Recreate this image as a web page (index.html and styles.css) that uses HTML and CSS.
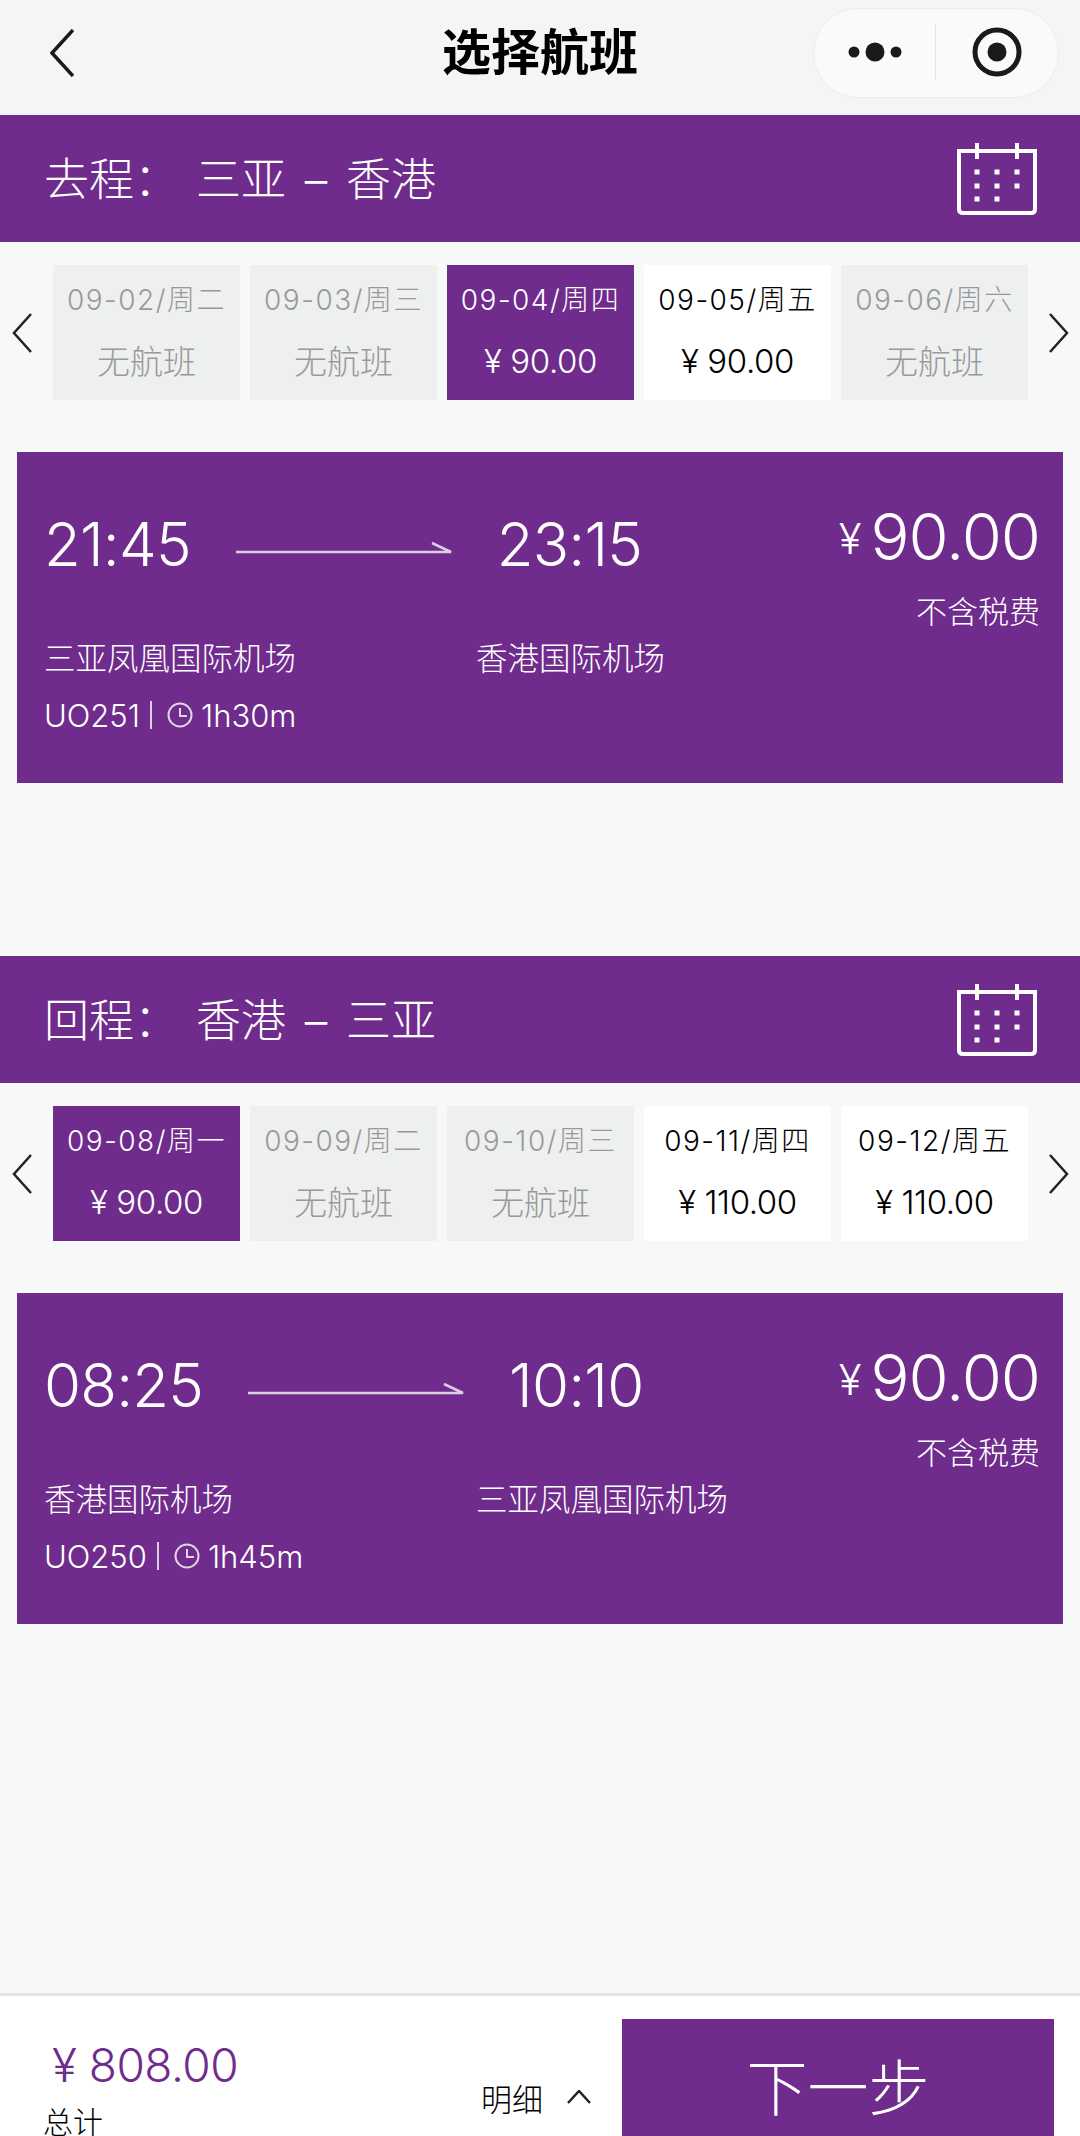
FILE: index.html
```html
<!DOCTYPE html>
<html>
  <head>
    <meta charset="utf-8">
    <title>选择航班</title>
    <link rel="stylesheet" href="styles.css">
  </head>
  <body>
    <div id="app">

      <div class="nav">
        <svg class="nav-back" width="24" height="48" viewBox="0 0 24 48"><path d="M23 1 L2 24 L23 47" fill="none" stroke="#1a1a1a" stroke-width="3.5"/></svg>
        <div class="nav-title">选择航班</div>
        <div class="capsule">
          <div class="capsule-side">
            <svg width="54" height="20" viewBox="0 0 54 20"><circle cx="6" cy="10" r="5.5" fill="#1a1a1a"/><circle cx="27" cy="10" r="9.5" fill="#1a1a1a"/><circle cx="48" cy="10" r="5.5" fill="#1a1a1a"/></svg>
          </div>
          <div class="capsule-side">
            <svg width="50" height="50" viewBox="0 0 50 50"><circle cx="25" cy="25" r="22" fill="none" stroke="#1a1a1a" stroke-width="5"/><circle cx="25" cy="25" r="9.5" fill="#1a1a1a"/></svg>
          </div>
        </div>
      </div>

      <div class="trip-head">
        <div class="trip-title"><span class="trip-label">去程：</span>三亚<span class="dash">–</span>香港</div>
        <svg class="cal" width="80" height="72" viewBox="0 0 80 72">
          <path d="M2 8 H78 V66 Q78 70 74 70 H6 Q2 70 2 66 Z" fill="none" stroke="#fff" stroke-width="4"/>
          <path d="M20 0 V16 M60 0 V16" stroke="#fff" stroke-width="4"/>
          <path d="M17.500 29 H22.500 M37.500 29 H42.500 M57.500 29 H62.500 M17.500 43 H22.500 M37.500 43 H42.500 M57.500 43 H62.500 M17.500 56 H22.500 M37.500 56 H42.500" stroke="#fff" stroke-width="5"/>
        </svg>
      </div>

      <div class="days">
        <svg class="pager" width="20" height="40" viewBox="0 0 20 40"><path d="M19 1 L2 20 L19 39" fill="none" stroke="#222" stroke-width="2.5"/></svg>
        <div class="day off"><div class="day-date">09-02/周二</div><div class="day-none">无航班</div></div>
        <div class="day off"><div class="day-date">09-03/周三</div><div class="day-none">无航班</div></div>
        <div class="day on"><div class="day-date">09-04/周四</div><div class="day-price">¥ 90.00</div></div>
        <div class="day"><div class="day-date">09-05/周五</div><div class="day-price">¥ 90.00</div></div>
        <div class="day off"><div class="day-date">09-06/周六</div><div class="day-none">无航班</div></div>
        <svg class="pager" width="20" height="40" viewBox="0 0 20 40"><path d="M1 1 L18 20 L1 39" fill="none" stroke="#222" stroke-width="2.5"/></svg>
      </div>

      <div class="flight">
        <div class="flight-main">
          <div class="flight-times">
            <span class="time">21:45</span>
            <svg class="arrow" width="216" height="14" viewBox="0 0 216 14"><path d="M0 11 H215 L196 2" fill="none" stroke="#d9cfe0" stroke-width="2.5"/></svg>
            <span class="time">23:15</span>
          </div>
          <div class="airports">
            <div class="airport">三亚凤凰国际机场</div>
            <div>香港国际机场</div>
          </div>
          <div class="flight-info">
            <span>UO251</span><span class="bar"></span>
            <svg width="26" height="28" viewBox="0 0 26 28"><circle cx="13" cy="14" r="11.5" fill="none" stroke="#e0d6e6" stroke-width="2"/><path d="M13 7 V15 H20" fill="none" stroke="#e0d6e6" stroke-width="2"/></svg>
            <span>1h30m</span>
          </div>
        </div>
        <div class="flight-price">
          <div class="fare"><span class="yen">¥</span>90.00</div>
          <div class="tax">不含税费</div>
        </div>
      </div>

      <div class="trip-head second">
        <div class="trip-title"><span class="trip-label">回程：</span>香港<span class="dash">–</span>三亚</div>
        <svg class="cal" width="80" height="72" viewBox="0 0 80 72">
          <path d="M2 8 H78 V66 Q78 70 74 70 H6 Q2 70 2 66 Z" fill="none" stroke="#fff" stroke-width="4"/>
          <path d="M20 0 V16 M60 0 V16" stroke="#fff" stroke-width="4"/>
          <path d="M17.500 29 H22.500 M37.500 29 H42.500 M57.500 29 H62.500 M17.500 43 H22.500 M37.500 43 H42.500 M57.500 43 H62.500 M17.500 56 H22.500 M37.500 56 H42.500" stroke="#fff" stroke-width="5"/>
        </svg>
      </div>

      <div class="days">
        <svg class="pager" width="20" height="40" viewBox="0 0 20 40"><path d="M19 1 L2 20 L19 39" fill="none" stroke="#222" stroke-width="2.5"/></svg>
        <div class="day on"><div class="day-date">09-08/周一</div><div class="day-price">¥ 90.00</div></div>
        <div class="day off"><div class="day-date">09-09/周二</div><div class="day-none">无航班</div></div>
        <div class="day off"><div class="day-date">09-10/周三</div><div class="day-none">无航班</div></div>
        <div class="day"><div class="day-date">09-11/周四</div><div class="day-price">¥ 110.00</div></div>
        <div class="day"><div class="day-date">09-12/周五</div><div class="day-price">¥ 110.00</div></div>
        <svg class="pager" width="20" height="40" viewBox="0 0 20 40"><path d="M1 1 L18 20 L1 39" fill="none" stroke="#222" stroke-width="2.5"/></svg>
      </div>

      <div class="flight">
        <div class="flight-main">
          <div class="flight-times">
            <span class="time">08:25</span>
            <svg class="arrow" width="216" height="14" viewBox="0 0 216 14"><path d="M0 11 H215 L196 2" fill="none" stroke="#d9cfe0" stroke-width="2.5"/></svg>
            <span class="time">10:10</span>
          </div>
          <div class="airports">
            <div class="airport">香港国际机场</div>
            <div>三亚凤凰国际机场</div>
          </div>
          <div class="flight-info">
            <span>UO250</span><span class="bar"></span>
            <svg width="26" height="28" viewBox="0 0 26 28"><circle cx="13" cy="14" r="11.5" fill="none" stroke="#e0d6e6" stroke-width="2"/><path d="M13 7 V15 H20" fill="none" stroke="#e0d6e6" stroke-width="2"/></svg>
            <span>1h45m</span>
          </div>
        </div>
        <div class="flight-price">
          <div class="fare"><span class="yen">¥</span>90.00</div>
          <div class="tax">不含税费</div>
        </div>
      </div>

      <div class="footer">
        <div class="total">
          <div class="total-price">¥ 808.00</div>
          <div class="total-label">总计</div>
        </div>
        <div class="detail">
          <span>明细</span>
          <svg width="24" height="14" viewBox="0 0 24 14"><path d="M1 13 L12 1 L23 13" fill="none" stroke="#222" stroke-width="2.5"/></svg>
        </div>
        <div class="next">下一步</div>
      </div>

    </div>
  </body>
</html>
```

FILE: styles.css
```css
*{
  box-sizing: border-box;
}

body{
  margin: 0;
  background: #f7f9f9;
  font-family: Inter, "Noto Sans CJK SC", sans-serif;
  font-weight: 300;
}

#app{
  display: flex;
  flex-direction: column;
  width: 1080px;
  height: 2136px;
  overflow: hidden;
}

/* top bar */
.nav{
  display: flex;
  align-items: center;
  justify-content: space-between;
  position: relative;
  flex: none;
  height: 115px;
  padding: 0 21px 10px 50px;
  background: #f4f5f5;
}

.nav-title{
  position: absolute;
  left: 0;
  right: 0;
  top: 19px;
  text-align: center;
  font-family: "Noto Sans CJK SC", sans-serif;
  font-size: 49px;
  line-height: 60px;
  font-weight: 700;
  color: #000;
}

.capsule{
  display: flex;
  width: 246px;
  height: 90px;
  border: 1px solid #ececec;
  border-radius: 45px;
  background: #fafafa;
}

.capsule-side{
  display: flex;
  align-items: center;
  justify-content: center;
  width: 50%;
  padding-bottom: 2px;
}

.capsule-side:first-child{
  position: relative;
}

.capsule-side:first-child:after{
  content: "";
  position: absolute;
  right: 0;
  top: 16px;
  bottom: 16px;
  border-right: 1px solid #e2e2e2;
}

/* purple trip headers */
.trip-head{
  display: flex;
  align-items: center;
  justify-content: space-between;
  flex: none;
  height: 127px;
  padding: 0 43px 0 44px;
  background: #6f2c8c;
  color: #fff;
}

.trip-head.second{
  margin-top: 173px;
}

.trip-title{
  margin-bottom: 4px;
  font-family: "Noto Sans CJK SC", sans-serif;
  font-size: 45px;
  font-weight: 300;
  white-space: nowrap;
}

.trip-label{
  display: inline-block;
  width: 152px;
}

.dash{
  display: inline-block;
  width: 60px;
  text-align: center;
  font-family: Inter, sans-serif;
}

/* date strip */
.days{
  display: flex;
  align-items: center;
  flex: none;
  gap: 10px;
  height: 135px;
  margin-top: 23px;
}

.pager:first-child{
  margin: 0 11px 0 12px;
}

.pager:last-child{
  margin-left: 11px;
}

.day{
  display: flex;
  flex-direction: column;
  align-items: center;
  width: 187px;
  height: 135px;
  padding-top: 15px;
  background: #fff;
  color: #000;
}

.day.off{
  background: #eeefef;
  color: #999;
}

.day.on{
  background: #6f2c8c;
  color: #fff;
}

.day-date{
  height: 40px;
  font-size: 28px;
  line-height: 40px;
  letter-spacing: 1.500px;
  white-space: nowrap;
}

.day-none{
  margin-top: 17px;
  font-size: 33px;
  line-height: 50px;
}

.day-price{
  margin-top: 16px;
  font-size: 33px;
  line-height: 50px;
  letter-spacing: -0.400px;
}

/* flight card */
.flight{
  display: flex;
  justify-content: space-between;
  flex: none;
  height: 331px;
  margin: 52px 17px 0;
  padding: 0 23px 0 27px;
  background: #6f2c8c;
  color: #fff;
}

.flight-times{
  display: flex;
  align-items: center;
  height: 70px;
  margin-top: 57px;
}

.time{
  font-size: 60px;
  line-height: 70px;
  letter-spacing: -0.800px;
}

.arrow{
  margin: 8px 45px 0;
}

.airports{
  display: flex;
  margin-top: 58px;
  font-size: 31.500px;
  line-height: 44px;
}

.airport{
  width: 432px;
}

.flight-info{
  display: flex;
  align-items: center;
  height: 36px;
  margin-top: 16px;
  font-size: 31px;
}

.bar{
  width: 2px;
  height: 28px;
  margin: 0 15px 0 10px;
  background: #d9cfe0;
}

.flight-info svg{
  margin-right: 8px;
}

.flight-price{
  text-align: right;
}

.fare{
  margin-top: 47px;
  font-size: 65px;
  line-height: 76px;
  letter-spacing: -1px;
}

.yen{
  margin-right: 10px;
  font-size: 42px;
  vertical-align: 6px;
}

.tax{
  margin-top: 13px;
  font-size: 31px;
  line-height: 44px;
}

/* bottom bar */
.footer{
  display: flex;
  flex: none;
  height: 143px;
  margin-top: auto;
  padding: 23px 26px 0 0;
  border-top: 3px solid #e2e2e2;
  background: #fff;
}

.total{
  flex: 1;
  padding-left: 43px;
}

.total-price{
  margin: 18px 0 0 9px;
  font-size: 46px;
  line-height: 56px;
  letter-spacing: -0.500px;
  color: #6f2c8c;
}

.total-label{
  margin-top: 7px;
  font-size: 30px;
  line-height: 44px;
  color: #000;
}

.detail{
  display: flex;
  align-items: center;
  gap: 24px;
  height: 44px;
  margin: 56px 31px 0 0;
  font-size: 31px;
  color: #000;
}

.next{
  width: 432px;
  height: 140px;
  padding-top: 26px;
  background: #6f2c8c;
  color: #fff;
  font-family: "Noto Sans CJK SC", sans-serif;
  font-size: 61px;
  line-height: 80px;
  text-align: center;
}
```
